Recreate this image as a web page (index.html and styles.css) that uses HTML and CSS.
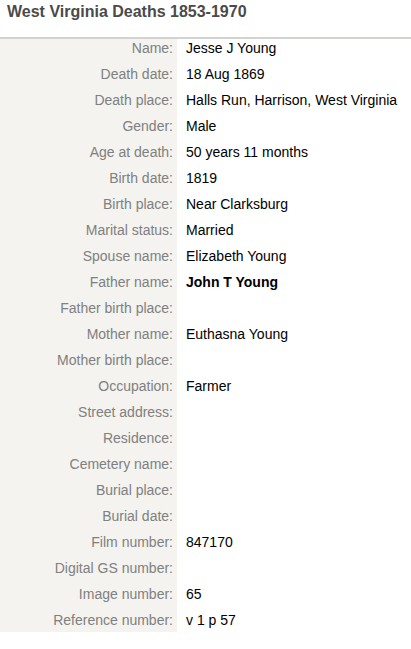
FILE: index.html
```html
<!DOCTYPE html>
<html>
<head>
<meta charset="utf-8">
<link rel="stylesheet" href="styles.css">
</head>
<body>
<div class="page">
  <h1 class="title">West Virginia Deaths 1853-1970</h1>
  <div class="record">
    <div class="label">Name:</div><div class="value">Jesse J Young</div>
    <div class="label">Death date:</div><div class="value">18 Aug 1869</div>
    <div class="label">Death place:</div><div class="value">Halls Run, Harrison, West Virginia</div>
    <div class="label">Gender:</div><div class="value">Male</div>
    <div class="label">Age at death:</div><div class="value">50 years 11 months</div>
    <div class="label">Birth date:</div><div class="value">1819</div>
    <div class="label">Birth place:</div><div class="value">Near Clarksburg</div>
    <div class="label">Marital status:</div><div class="value">Married</div>
    <div class="label">Spouse name:</div><div class="value">Elizabeth Young</div>
    <div class="label">Father name:</div><div class="value strong">John T Young</div>
    <div class="label">Father birth place:</div><div class="value"></div>
    <div class="label">Mother name:</div><div class="value">Euthasna Young</div>
    <div class="label">Mother birth place:</div><div class="value"></div>
    <div class="label">Occupation:</div><div class="value">Farmer</div>
    <div class="label">Street address:</div><div class="value"></div>
    <div class="label">Residence:</div><div class="value"></div>
    <div class="label">Cemetery name:</div><div class="value"></div>
    <div class="label">Burial place:</div><div class="value"></div>
    <div class="label">Burial date:</div><div class="value"></div>
    <div class="label">Film number:</div><div class="value">847170</div>
    <div class="label">Digital GS number:</div><div class="value"></div>
    <div class="label">Image number:</div><div class="value">65</div>
    <div class="label">Reference number:</div><div class="value">v 1 p 57</div>
  </div>
</div>
</body>
</html>
```
FILE: styles.css
```css
html, body {
  margin: 0;
  padding: 0;
  background: #fff;
}
body {
  font-family: "Liberation Sans", Arial, sans-serif;
}
.title {
  margin: 0;
  padding: 3px 7px 16px;
  font-size: 16px;
  line-height: 18px;
  font-weight: bold;
  color: #4a4a4a;
  border-bottom: 2px solid #d2d2ce;
}
.record {
  display: grid;
  grid-template-columns: 177px 1fr;
  row-gap: 8px;
  padding-bottom: 3px;
  background: linear-gradient(to right, #f4f3ef 177px, #fff 177px);
  font-size: 14px;
  line-height: 18px;
}
.label {
  text-align: right;
  padding-right: 4px;
  color: #808080;
  height: 18px;
}
.value {
  padding-left: 9px;
  color: #000;
  height: 18px;
  white-space: nowrap;
}
.strong {
  font-weight: bold;
}
```
